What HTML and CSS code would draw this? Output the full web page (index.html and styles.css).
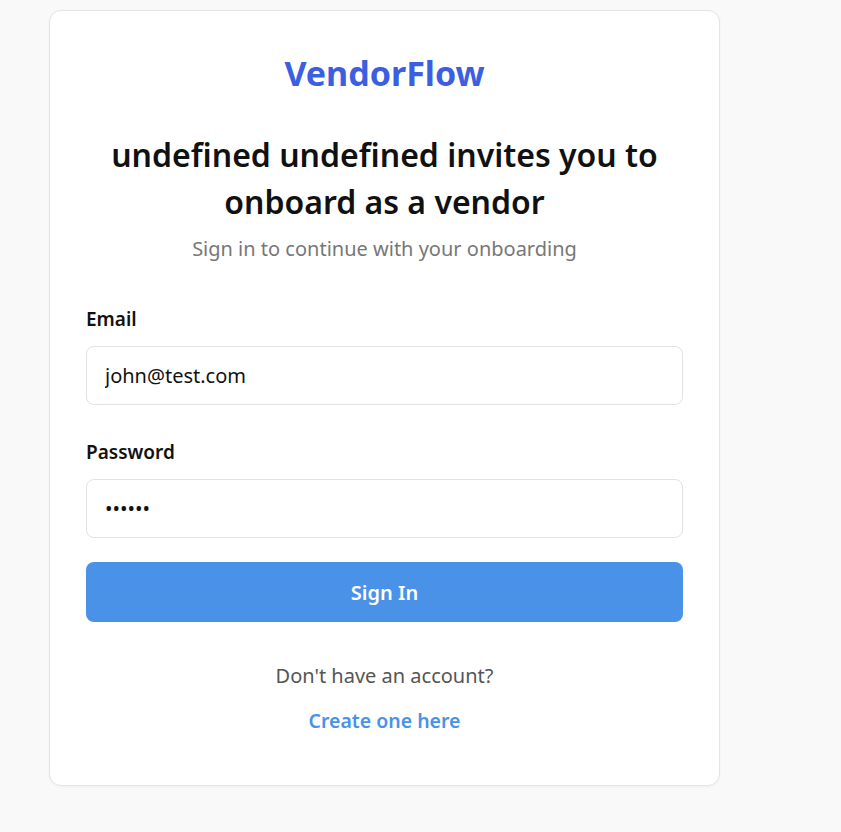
FILE: index.html
```html
<!DOCTYPE html>
<html>
<head>
<meta charset="utf-8">
<link rel="stylesheet" href="styles.css">
</head>
<body>
<div class="card">
  <div class="brand">VendorFlow</div>
  <h1 class="title">undefined undefined invites you to onboard as a vendor</h1>
  <p class="subtitle">Sign in to continue with your onboarding</p>
  <form class="form">
    <div class="field">
      <label class="label">Email</label>
      <input class="input" type="email" value="john@test.com">
    </div>
    <div class="field">
      <label class="label">Password</label>
      <input class="input" type="password" value="secret">
    </div>
    <button class="button" type="button">Sign In</button>
  </form>
  <div class="footer">
    <p class="footer-text">Don't have an account?</p>
    <a class="footer-link" href="#">Create one here</a>
  </div>
</div>
</body>
</html>
```
FILE: styles.css
```css
html, body {
  margin: 0;
  padding: 0;
}
body {
  background: #f9f9f9;
  font-family: "Noto Sans", "Open Sans", sans-serif;
  color: #111;
  padding: 10px 0 0 49px;
  min-height: 832px;
  box-sizing: border-box;
}
.card {
  width: 671px;
  box-sizing: border-box;
  background: #fff;
  border: 1px solid #e4e4e4;
  border-radius: 12px;
  padding: 36px 36px 50px;
  box-shadow: 0 1px 3px rgba(0,0,0,0.04);
}
.brand {
  text-align: center;
  font-size: 34px;
  font-weight: 700;
  color: #3b5fe0;
  line-height: 52px;
}
.title {
  margin: 32px 0 0;
  text-align: center;
  font-size: 32px;
  font-weight: 600;
  line-height: 47px;
  color: #111;
  padding: 0 10px;
}
.subtitle {
  margin: 10px 0 0;
  text-align: center;
  font-size: 20px;
  color: #777;
  line-height: 28px;
}
.form {
  margin-top: 43px;
  display: flex;
  flex-direction: column;
}
.field {
  display: flex;
  flex-direction: column;
  margin-bottom: 34px;
}
.field + .button {
  margin-top: -10px;
}
.label {
  font-size: 19px;
  font-weight: 600;
  line-height: 26px;
  margin-bottom: 14px;
  color: #111;
}
.input {
  height: 59px;
  box-sizing: border-box;
  border: 1px solid #e2e2e2;
  border-radius: 8px;
  padding: 0 18px;
  font-family: inherit;
  font-size: 20px;
  color: #111;
  outline: none;
}
.button {
  height: 60px;
  border: none;
  border-radius: 8px;
  background: #4a92e8;
  color: #fff;
  font-family: inherit;
  font-size: 20px;
  font-weight: 600;
}
.footer {
  margin-top: 40px;
  display: flex;
  flex-direction: column;
  align-items: center;
}
.footer-text {
  margin: 0;
  font-size: 20px;
  color: #555;
  line-height: 28px;
}
.footer-link {
  margin-top: 17px;
  font-size: 19.5px;
  font-weight: 600;
  color: #4a92e8;
  text-decoration: none;
  line-height: 28px;
}
```
